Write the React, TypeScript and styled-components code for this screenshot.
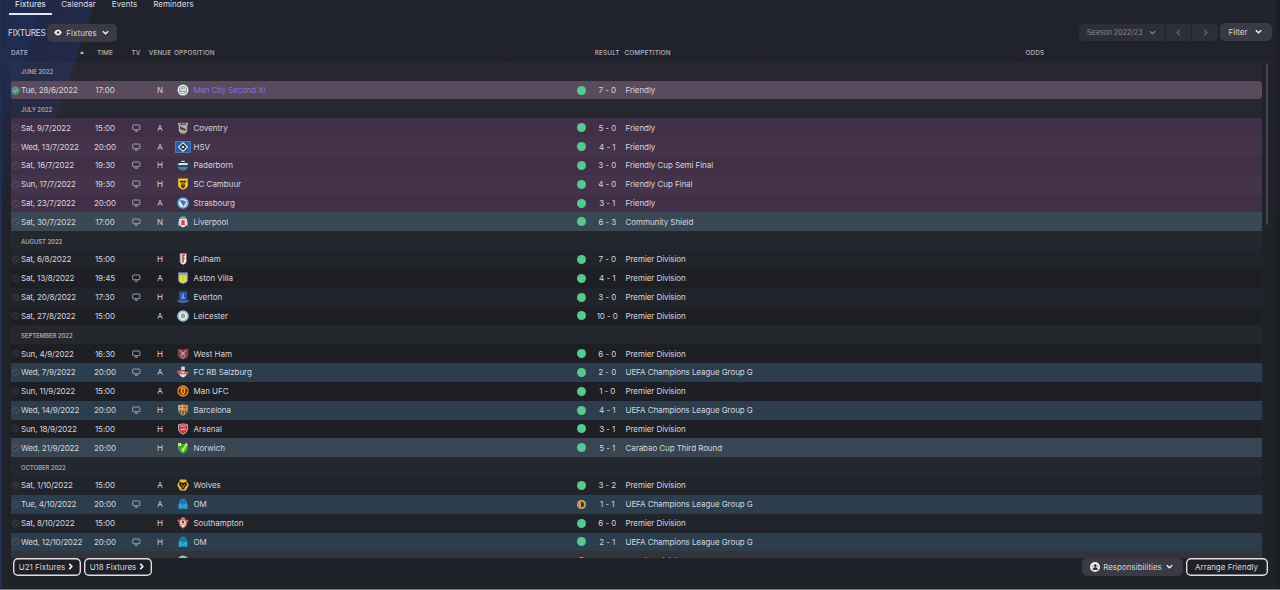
import React from "react";
import styled, { createGlobalStyle } from "styled-components";

const Global = createGlobalStyle`
  * { box-sizing: border-box; }
  body { margin: 0; background: #20222a; overflow: hidden; }
`;

const Screen = styled.div`
  width: 1280px;
  height: 590px;
  overflow: hidden;
  display: flex;
  flex-direction: column;
  font-family: "Inter", sans-serif;
  font-size: 8px;
  color: #d3d2d8;
  border-bottom: 1px solid #77777b;
  background:
    linear-gradient(90deg, #263457 0, #222a42 1.5px, transparent 3px),
    linear-gradient(270deg, #1c1d23 0, #1c1d23 3px, transparent 4px),
    linear-gradient(180deg, transparent 0, transparent 60px, #20222a 230px),
    linear-gradient(108.5deg, #1e2a4b 0, #202d52 34px, #202d50 42px, #212846 43px, #23294a 90px, transparent 91px),
    linear-gradient(180deg, #20242c 0, #21222b 60px, #202127 100%);
`;

const Tabs = styled.nav`
  display: flex;
  height: 15px;
  padding-left: 9px;
`;

const Tab = styled.div<{ $w: number; $active?: boolean }>`
  width: ${(p) => p.$w}px;
  height: 15px;
  line-height: 8px;
  text-align: center;
  white-space: nowrap;
  letter-spacing: 0.06px;
  color: ${(p) => (p.$active ? "#eeeef4" : "#dcdce2")};
  border-bottom: ${(p) => (p.$active ? "2px solid #e6e8f0" : "0")};
`;

const Toolbar = styled.div`
  display: flex;
  align-items: center;
  height: 33px;
  padding: 2px 8px 0 8px;
`;

const Title = styled.h1`
  margin: 0;
  width: 39px;
  padding-top: 1px;
  font-size: 8.4px;
  font-weight: 400;
  letter-spacing: -0.3px;
  color: #d8d9e0;
`;

const Spacer = styled.div`
  flex: 1;
`;

const Dropdown = styled.button<{ $w: number; $gap?: number; $lift?: number }>`
  display: flex;
  align-items: center;
  justify-content: center;
  gap: ${(p) => p.$gap ?? 5}px;
  width: ${(p) => p.$w}px;
  height: 18px;
  margin-bottom: ${(p) => p.$lift ?? 0}px;
  padding: 0;
  border: 0;
  border-radius: 5px;
  background: #393a43;
  color: #d6d6dc;
  font: inherit;
  white-space: nowrap;
`;

const SeasonGroup = styled.div`
  display: grid;
  grid-template-columns: 86px 25px 26px;
  gap: 1px;
  height: 17px;
  margin-right: 2px;
  border-radius: 5px;
  overflow: hidden;
`;

const SeasonPart = styled.div`
  display: flex;
  align-items: center;
  justify-content: center;
  gap: 6px;
  background: #2d2e37;
  color: #85868e;
  font-size: 7.4px;
  letter-spacing: -0.16px;
`;

const columns = "10px 64.5px 39px 23px 25px 21px 379px 18px 33.5px 401px 1fr";

const HeadRow = styled.div`
  display: grid;
  grid-template-columns: ${columns};
  align-items: center;
  height: 14.8px;
  width: 1251px;
  margin-left: 11px;
  margin-top: -1px;
  padding-bottom: 3px;
  font-size: 6.4px;
  font-weight: 500;
  letter-spacing: 0.12px;
  color: #b4b5bd;
`;

const HeadCell = styled.div<{ $from: number; $to?: number; $align?: string; $pad?: number }>`
  grid-row: 1;
  grid-column: ${(p) => p.$from} / ${(p) => p.$to ?? p.$from + 1};
  display: flex;
  align-items: center;
  justify-content: ${(p) => p.$align ?? "flex-start"};
  padding-left: ${(p) => p.$pad ?? 0}px;
  padding-right: ${(p) => (p.$align === "flex-end" ? 1.5 : 0)}px;
  white-space: nowrap;
`;

const Body = styled.div`
  display: flex;
  height: 495.9px;
  padding-left: 11px;
  overflow: hidden;
`;

const List = styled.div`
  width: 1251px;
  height: 100%;
  overflow: hidden;
`;

const Scrollbar = styled.div`
  width: 2.5px;
  height: 162px;
  margin: 1px 0 0 3.5px;
  border-radius: 1px;
  background: #45464e;
`;

const MonthRow = styled.div`
  display: flex;
  align-items: center;
  height: 18.84px;
  padding: 1px 0 0 10px;
  font-size: 6px;
  font-weight: 600;
  letter-spacing: -0.08px;
  color: #a1a2aa;
  background: rgba(255, 255, 255, 0.025);
`;

const tones = {
  selected: "#594b5d",
  purple: "#412f48",
  purpleAlt: "#45334c",
  shield: "#3a4754",
  euro: "#2c3e4e",
  cup: "#394552",
  dark: "#1e1f25",
  plain: "rgba(255, 255, 255, 0.012)",
  last: "#333338",
};
type Tone = keyof typeof tones;

const Row = styled.div<{ $tone: Tone }>`
  display: grid;
  grid-template-columns: ${columns};
  align-items: center;
  height: 18.84px;
  padding-top: ${(p) => (p.$tone === "last" ? 1.5 : 0)}px;
  border-radius: ${(p) => (p.$tone === "selected" ? "3px" : "0")};
  background: ${(p) => tones[p.$tone]};
`;

const Cell = styled.div<{ $center?: boolean; $pad?: number; $link?: boolean; $track?: number }>`
  display: flex;
  align-items: center;
  justify-content: ${(p) => (p.$center ? "center" : "flex-start")};
  padding-left: ${(p) => p.$pad ?? 0}px;
  letter-spacing: ${(p) => p.$track ?? -0.07}px;
  white-space: nowrap;
  color: ${(p) => (p.$link ? "#8670da" : "#d6d5da")};
`;

const Dot = styled.i<{ $draw?: boolean }>`
  width: 9px;
  height: 9px;
  border-radius: 50%;
  background: ${(p) => (p.$draw ? "#d9a95b" : "#56c98f")};
  display: flex;
  align-items: center;
  justify-content: center;
`;

const HalfMark = styled.i`
  width: 5px;
  height: 5px;
  border-radius: 50%;
  background: linear-gradient(90deg, #d9a95b 50%, #34342f 50%);
  box-shadow: 0 0 0 0.5px #7f683f;
`;

const Footer = styled.footer`
  display: flex;
  align-items: flex-start;
  padding: 0 12.5px 0 13px;
  gap: 3px;
`;

const OutlineButton = styled.button<{ $w: number }>`
  display: flex;
  align-items: center;
  justify-content: center;
  gap: 1px;
  width: ${(p) => p.$w}px;
  height: 18px;
  padding: 0;
  border: 0;
  box-shadow: inset 0 0 0 1.4px #dedee2;
  border-radius: 5px;
  background: #1f2027;
  color: #d6d6dc;
  font: inherit;
  white-space: nowrap;
`;

const Chevron = ({ dir = "down", color = "#f0f0f4", size = 9, weight = 1.7 }: { dir?: "down" | "left" | "right"; color?: string; size?: number; weight?: number }) => {
  const d = { down: "M2 3.6 5 6.4 8 3.6", left: "M6.4 2 3.6 5 6.4 8", right: "M3.6 2 6.4 5 3.6 8" }[dir];
  return (
    <svg width={size} height={size} viewBox="0 0 10 10" fill="none" stroke={color} strokeWidth={weight}>
      <path d={d} />
    </svg>
  );
};

const Tick = ({ on }: { on?: boolean }) => (
  <svg width="9" height="9" viewBox="0 0 9 9">
    <circle cx="4.5" cy="4.5" r="4.2" fill={on ? "#5c8f80" : "#ffffff"} fillOpacity={on ? 1 : 0.06} />
    <path d="M2.4 4.6 4 6.1 6.8 2.9" fill="none" stroke={on ? "#83d0ab" : "#17181d"} strokeOpacity={on ? 1 : 0.5} strokeWidth="1" />
  </svg>
);

const Monitor = () => (
  <svg width="9" height="8" viewBox="0 0 9 8" fill="none" stroke="#b9b8c1" strokeWidth="0.8">
    <rect x="0.7" y="1" width="7.2" height="4.7" rx="0.7" />
    <path d="M2.8 7.1h3" strokeWidth="1" />
  </svg>
);

const crests: Record<string, React.ReactNode> = {
  city: (
    <>
      <circle cx="6" cy="6" r="5.5" fill="#e6edf1" />
      <circle cx="6" cy="6" r="4" fill="#7f9fb5" />
      <path d="M3.4 3.4h5.2v3.2Q8.4 9 6 9.6 3.6 9 3.4 6.6z" fill="#f1f3ee" />
      <path d="M4 3.8h4v1.6H4z" fill="#c7ad6c" />
      <path d="M4 7l4 .8" stroke="#5d88a8" />
    </>
  ),
  coventry: (
    <>
      <path d="M1 .8h10v2.6H1z" fill="#b5a17e" />
      <path d="M1.8 3.2h8.4v5.4Q8.6 11 6 11.4 3.4 11 1.8 8.6z" fill="#a3bcc4" />
      <path d="M3 4.2 9.2 7.2v2.6L3 7z" fill="#4d4741" />
      <path d="M1.6 8.4h8.8L8.4 11.4H3.6z" fill="#c7a879" />
      <path d="M3 2.2h6" stroke="#4b382e" />
    </>
  ),
  paderborn: (
    <>
      <circle cx="6" cy="6" r="5.6" fill="#3f83b0" />
      <path d="M.8 4.4Q2 .4 6 .4t5.2 4z" fill="#2a3440" />
      <path d="M1.6 4h8.8v2.2H1.6z" fill="#dde6e8" />
      <path d="M0 6.2h12v1.8H0z" fill="#2f4556" />
      <path d="M4.2 2.4h3.6" stroke="#d5dadb" strokeWidth="1.2" />
    </>
  ),
  cambuur: (
    <>
      <path d="M1.2.4h9.6v7.4Q10 10.4 6 11.8 2 10.4 1.2 7.8z" fill="#f1cb25" />
      <path d="M2.8 2.8h6.4v1.8H2.8zM4 5.4h4v3.4L6 10.4 4 8.8z" fill="#43331c" />
      <path d="M4.4 5.8h3.2v1.8H4.4z" fill="#c84336" />
    </>
  ),
  strasbourg: (
    <>
      <circle cx="6" cy="6" r="5.8" fill="#63b1de" />
      <circle cx="6" cy="6" r="3.9" fill="#e7edf1" />
      <path d="M2.8 3.2h3.4l2.2 3L6.4 9.4z" fill="#317dbb" />
      <path d="M5.6 3.4 9 4.2 8 7.8z" fill="#d04c56" />
    </>
  ),
  liverpool: (
    <>
      <path d="M3.6.4h4.8l.8 2.4H2.8z" fill="#77b3a2" />
      <path d="M2 2.8h8v5.8Q9 10.8 6 11.6 3 10.8 2 8.6z" fill="#e8dad9" />
      <path d="M4.4 4.2h3.2v2.6L8 9H4l.4-2.2z" fill="#cc4450" />
      <path d="M1.6 5.4v4.6M10.4 5.4v4.6" stroke="#78a99f" />
    </>
  ),
  fulham: (
    <>
      <path d="M2.8.4h6.6v8.4Q8.8 10.8 6 11.8 3.4 10.8 2.8 8.8z" fill="#eceaec" />
      <path d="M8 2H6v7.6M6 5.2h1.8" fill="none" stroke="#c74045" strokeWidth="1.5" />
      <path d="M3.7 1v8.6" stroke="#6d6668" strokeWidth=".6" />
    </>
  ),
  villa: (
    <>
      <path d="M1.4.4h9.2v8.6Q9.6 11 6 11.8 2.4 11 1.4 9z" fill="#a9bcc9" />
      <path d="M2.6 3.4h6.8v5.2L6 11 2.6 8.6z" fill="#dce226" />
      <path d="M2.6 2h6.8" stroke="#7d8193" />
      <path d="M5 4.4l2 1-1 3" fill="none" stroke="#c5c628" />
    </>
  ),
  everton: (
    <>
      <path d="M2 .6h8v7Q9.4 9.8 6 11 2.6 9.8 2 7.6z" fill="#2e53a6" />
      <path d="M5.2 3.2Q6 1.2 6.8 3.2v4.4H5.2zM3.8 6.4h4.4v1.2H3.8z" fill="#8da5d3" />
      <path d="M.4 8.4Q6 12.4 11.6 8.4l-.4 2.2Q6 13 .8 10.6z" fill="#5a7fc9" />
    </>
  ),
  leicester: (
    <>
      <circle cx="6" cy="6" r="5.8" fill="#93c6e6" />
      <circle cx="6" cy="6" r="4" fill="#e2e6da" />
      <path d="M3.8 5 6 3.2 8.2 5l-.8 3H4.6z" fill="#7198aa" />
      <path d="M5 5l2 3M7.4 4 4.8 8" stroke="#c7b54b" strokeWidth=".8" />
    </>
  ),
  westham: (
    <>
      <path d="M.8.8 6 1.6 11.2.8v6.6Q10 10 6 11.6 2 10 .8 7.4z" fill="#963c48" />
      <path d="M3 2.4 8.8 8.6M9 2.4 3.2 8.6" stroke="#c9b8b4" strokeWidth="1" />
      <path d="M4.6 4h2.8v3H4.6z" fill="#8fa9b8" />
      <path d="M4 9h4L6 10.8z" fill="#81a7bd" />
    </>
  ),
  salzburg: (
    <>
      <path d="M4.2.6h3.6v3.6H4.2z" fill="#dcd8db" />
      <path d="M1.6 6h8.8Q9.6 10.6 6 11.4 2.4 10.6 1.6 6z" fill="#e4dfe3" />
      <path d="M0 5.2Q3 3.4 6 5t6 .2L10.6 8.2H1.4z" fill="#dc5963" />
      <path d="M4.4 5.6h3.2v1.4H4.4z" fill="#f3dcda" />
    </>
  ),
  united: (
    <>
      <circle cx="6" cy="6" r="5.7" fill="#e4871f" />
      <circle cx="6" cy="6" r="4.1" fill="#59271a" />
      <path d="M3.6 2.6h4.8v5.2L6 10 3.6 7.8z" fill="#ed9d24" />
      <path d="M5.2 4h1.6v4H5.2z" fill="#96321e" />
      <path d="M.6 6h1.6M9.8 6h1.6" stroke="#6b2a19" strokeWidth=".8" />
    </>
  ),
  barca: (
    <>
      <path d="M.8 1.2 6 .4l5.2.8-.6 6.2Q9.6 10 6 11.8 2.4 10 1.4 7.4z" fill="#d2a13d" />
      <path d="M1.8 1.8h4v2.8h-4z" fill="#e4d0c6" />
      <path d="M3.8 1.8v2.8M1.8 3.2h4" stroke="#bf3b40" strokeWidth=".8" />
      <path d="M6.4 2.2h3.6v2.2H6.4z" fill="#c46529" />
      <path d="M2.6 6.4h1.5v2.8H2.6zM5.3 6.4h1.4v4H5.3zM7.9 6.4h1.5v2.8H7.9z" fill="#34477c" />
    </>
  ),
  arsenal: (
    <>
      <path d="M1 1.4Q6-.6 11 1.4v5.2Q10 10 6 11.8 2 10 1 6.6z" fill="#b9bac6" />
      <path d="M1.8 2Q6 .4 10.2 2v4.6Q9.2 9.6 6 11 2.8 9.6 1.8 6.6z" fill="#cb3440" />
      <path d="M3.2 3h5.6" stroke="#ecc5c6" strokeWidth=".9" />
      <path d="M3.2 6 8.8 5.4v1.4L4 7.6z" fill="#e1bf9d" />
    </>
  ),
  norwich: (
    <>
      <path d="M1 2h10v4.8Q10 10 6 11.8 2 10 1 6.8z" fill="#2cad4a" />
      <path d="M1 1h3.2v3H1zM9 .6l1.4 2L7.8 7 6.6 10.4 4 7.4 6.6 5.4z" fill="#e6e43b" />
    </>
  ),
  wolves: (
    <>
      <path d="M3.2.6h5.6L11.8 6l-3 5.4H3.2L.2 6z" fill="#efba2c" />
      <path d="M2.8 2.4l2.2 1.4h2l2.2-1.4L10 6 8 8l-.8 2.2H4.8L4 8 2 6z" fill="#24211f" />
      <path d="M3.8 5.4l1.3.8M8.2 5.4l-1.3.8M6 6.4v2.4" stroke="#efba2c" strokeWidth=".9" />
    </>
  ),
  om: (
    <>
      <path d="M1.2 11V6.4L3 2.6 4.4.8h3.2L9 2.6l1.8 3.8V11z" fill="#2187bb" />
      <path d="M3.4 10.6V6.4L6 9.2l2.6-2.8v4.2" fill="none" stroke="#5fb5da" strokeWidth=".9" />
      <path d="M4.8 2v3.2M7.2 2v3.2" stroke="#16507a" strokeWidth=".8" />
    </>
  ),
  saints: (
    <>
      <path d="M4 1Q6-.4 8 1v2H4z" fill="#a99a8c" />
      <path d="M.2 3 3 2.6h6l2.8.4L10 6.4 9.4 9.2 6 11.8 2.6 9.2 2 6.4z" fill="#d84c4f" />
      <path d="M3.2 3.6h5.6v4.2L6 10.8 3.2 7.8z" fill="#ebe8e2" />
      <path d="M4.8 4.2h2.4v1.8H4.8z" fill="#333a33" />
      <path d="M3.8 7.2h4.4" stroke="#488b58" strokeWidth=".8" />
    </>
  ),
  bhafc: <circle cx="6" cy="6" r="5.6" fill="#8bc9c6" />,
};

const Crest = ({ id }: { id: string }) =>
  id === "hsv" ? (
    <svg width="16" height="12" viewBox="0 0 16 12">
      <rect x=".4" y=".4" width="15.2" height="11.2" fill="#2361ae" stroke="#7293bd" strokeWidth=".6" />
      <path d="M8 1 13.2 6 8 11 2.8 6z" fill="#e8ebee" />
      <path d="M8 2.5 11.6 6 8 9.5 4.4 6z" fill="#20242b" />
      <path d="M8 4.4 9.7 6 8 7.6 6.3 6z" fill="#e8ebee" />
    </svg>
  ) : (
    <svg width="12" height="12" viewBox="0 0 12 12">{crests[id]}</svg>
  );

type Match = { date: string; time: string; tv: boolean; venue: string; crest: string; team: string; score: string; comp: string; tone: Tone };
const m = (date: string, time: string, tv: number, venue: string, crest: string, team: string, score: string, comp: string, tone: Tone): Match => ({
  date, time, tv: !!tv, venue, crest, team, score, comp, tone,
});

const PL = "Premier Division";
const UCL = "UEFA Champions League Group G";

const schedule: { month: string; matches: Match[] }[] = [
  { month: "JUNE 2022", matches: [m("Tue, 28/6/2022", "17:00", 0, "N", "city", "Man City Second XI", "7 - 0", "Friendly", "selected")] },
  {
    month: "JULY 2022",
    matches: [
      m("Sat, 9/7/2022", "15:00", 1, "A", "coventry", "Coventry", "5 - 0", "Friendly", "purple"),
      m("Wed, 13/7/2022", "20:00", 1, "A", "hsv", "HSV", "4 - 1", "Friendly", "purpleAlt"),
      m("Sat, 16/7/2022", "19:30", 1, "H", "paderborn", "Paderborn", "3 - 0", "Friendly Cup Semi Final", "purple"),
      m("Sun, 17/7/2022", "19:30", 1, "H", "cambuur", "SC Cambuur", "4 - 0", "Friendly Cup Final", "purpleAlt"),
      m("Sat, 23/7/2022", "20:00", 1, "A", "strasbourg", "Strasbourg", "3 - 1", "Friendly", "purple"),
      m("Sat, 30/7/2022", "17:00", 1, "N", "liverpool", "Liverpool", "6 - 3", "Community Shield", "shield"),
    ],
  },
  {
    month: "AUGUST 2022",
    matches: [
      m("Sat, 6/8/2022", "15:00", 0, "H", "fulham", "Fulham", "7 - 0", PL, "plain"),
      m("Sat, 13/8/2022", "19:45", 1, "A", "villa", "Aston Villa", "4 - 1", PL, "dark"),
      m("Sat, 20/8/2022", "17:30", 1, "H", "everton", "Everton", "3 - 0", PL, "plain"),
      m("Sat, 27/8/2022", "15:00", 0, "A", "leicester", "Leicester", "10 - 0", PL, "dark"),
    ],
  },
  {
    month: "SEPTEMBER 2022",
    matches: [
      m("Sun, 4/9/2022", "16:30", 1, "H", "westham", "West Ham", "6 - 0", PL, "dark"),
      m("Wed, 7/9/2022", "20:00", 1, "A", "salzburg", "FC RB Salzburg", "2 - 0", UCL, "euro"),
      m("Sun, 11/9/2022", "15:00", 0, "A", "united", "Man UFC", "1 - 0", PL, "dark"),
      m("Wed, 14/9/2022", "20:00", 1, "H", "barca", "Barcelona", "4 - 1", UCL, "euro"),
      m("Sun, 18/9/2022", "15:00", 0, "H", "arsenal", "Arsenal", "3 - 1", PL, "dark"),
      m("Wed, 21/9/2022", "20:00", 0, "H", "norwich", "Norwich", "5 - 1", "Carabao Cup Third Round", "cup"),
    ],
  },
  {
    month: "OCTOBER 2022",
    matches: [
      m("Sat, 1/10/2022", "15:00", 0, "A", "wolves", "Wolves", "3 - 2", PL, "plain"),
      m("Tue, 4/10/2022", "20:00", 1, "A", "om", "OM", "1 - 1", UCL, "euro"),
      m("Sat, 8/10/2022", "15:00", 0, "H", "saints", "Southampton", "6 - 0", PL, "plain"),
      m("Wed, 12/10/2022", "20:00", 1, "H", "om", "OM", "2 - 1", UCL, "euro"),
      m("Sat, 15/10/2022", "", 0, "", "bhafc", "Newcastle", "", PL, "last"),
    ],
  },
];

const MatchRow = ({ match }: { match: Match }) => (
  <Row $tone={match.tone}>
    <Cell><Tick on={match.tone === "selected"} /></Cell>
    <Cell $track={-0.15}>{match.date}</Cell>
    <Cell $center>{match.time}</Cell>
    <Cell $center>{match.tv && <Monitor />}</Cell>
    <Cell $center>{match.venue}</Cell>
    <Cell $center><Crest id={match.crest} /></Cell>
    <Cell $link={match.tone === "selected"} $track={match.tone === "selected" ? -0.15 : -0.04}>{match.team}</Cell>
    <Cell $center><Dot $draw={match.score === "1 - 1"}>{match.score === "1 - 1" && <HalfMark />}</Dot></Cell>
    <Cell $center>{match.score}</Cell>
    <Cell $pad={1.5}>{match.comp}</Cell>
  </Row>
);

export default function App() {
  return (
    <Screen>
      <Global />
      <Tabs>
        <Tab $w={43} $active>Fixtures</Tab>
        <Tab $w={53}>Calendar</Tab>
        <Tab $w={39}>Events</Tab>
        <Tab $w={59}>Reminders</Tab>
      </Tabs>
      <Toolbar>
        <Title>FIXTURES</Title>
        <Dropdown $w={70} $gap={4}>
          <svg width="8" height="7" viewBox="0 0 8 7">
            <path d="M0 3.5Q1.8.6 4 .6t4 2.9Q6.2 6.4 4 6.4T0 3.5z" fill="#eeeef3" />
            <circle cx="4" cy="3.5" r="1.2" fill="#34353e" />
          </svg>
          <span>Fixtures</span>
          <Chevron />
        </Dropdown>
        <Spacer />
        <SeasonGroup>
          <SeasonPart>Season 2022/23<Chevron color="#85868e" weight={1.2} /></SeasonPart>
          <SeasonPart><Chevron dir="left" color="#5e5f68" /></SeasonPart>
          <SeasonPart><Chevron dir="right" color="#5e5f68" /></SeasonPart>
        </SeasonGroup>
        <Dropdown $w={52} $gap={7} $lift={2}>Filter<Chevron /></Dropdown>
      </Toolbar>
      <HeadRow>
        <HeadCell $from={1} $to={3}>DATE</HeadCell>
        <HeadCell $from={2} $align="flex-end">
          <svg width="4" height="3" viewBox="0 0 5 3"><path d="M0 3 2.5 0 5 3z" fill="#dddde4" /></svg>
        </HeadCell>
        <HeadCell $from={3} $align="center">TIME</HeadCell>
        <HeadCell $from={4} $align="center">TV</HeadCell>
        <HeadCell $from={5} $align="center">VENUE</HeadCell>
        <HeadCell $from={6} $to={8} $pad={1.5}>OPPOSITION</HeadCell>
        <HeadCell $from={9} $align="center">RESULT</HeadCell>
        <HeadCell $from={10} $pad={0.5}>COMPETITION</HeadCell>
        <HeadCell $from={11} $pad={0.5}>ODDS</HeadCell>
      </HeadRow>
      <Body>
        <List>
          {schedule.map((group) => (
            <React.Fragment key={group.month}>
              <MonthRow>{group.month}</MonthRow>
              {group.matches.map((match) => <MatchRow key={match.date} match={match} />)}
            </React.Fragment>
          ))}
        </List>
        <Scrollbar />
      </Body>
      <Footer>
        <OutlineButton $w={68}>U21 Fixtures<Chevron dir="right" size={9} weight={1.9} /></OutlineButton>
        <OutlineButton $w={68}>U18 Fixtures<Chevron dir="right" size={9} weight={1.9} /></OutlineButton>
        <Spacer />
        <Dropdown $w={101} $gap={3}>
          <svg width="10" height="10" viewBox="0 0 10 10">
            <circle cx="5" cy="5" r="5" fill="#f0f0f2" />
            <circle cx="5.2" cy="3.6" r="1.3" fill="#2b2c33" />
            <path d="M2.8 7.6Q3 5.4 5.2 5.4T7.6 7.6zM2 5l1.2-1.4M7.2 3.4 8.2 5" fill="#2b2c33" stroke="#2b2c33" strokeWidth=".7" />
          </svg>
          Responsibilities
          <Chevron />
        </Dropdown>
        <OutlineButton $w={82}>Arrange Friendly</OutlineButton>
      </Footer>
    </Screen>
  );
}
